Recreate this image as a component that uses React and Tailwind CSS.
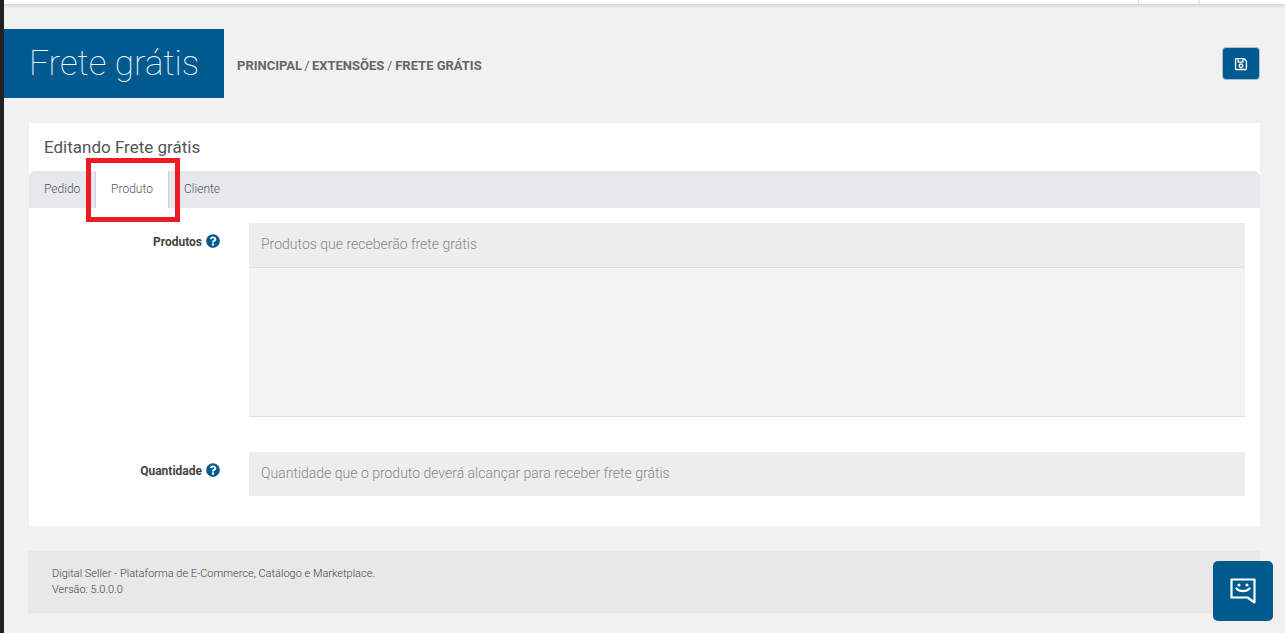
import React from "react";
import { FaQuestionCircle, FaRegSave } from "react-icons/fa";

function Help() {
  return <FaQuestionCircle className="text-[14px] text-[#005a8f] shrink-0" />;
}

function Field({ label, children, className = "" }) {
  return (
    <div className={`flex ${className}`}>
      <div className="w-[191px] pt-[11px] flex justify-end items-start gap-[4px] text-[12px] leading-[16px] font-bold text-[#444]">
        <span>{label}</span>
        <Help />
      </div>
      <div className="ml-[29px] w-[996px]">{children}</div>
    </div>
  );
}

export default function App() {
  return (
    <div className="relative h-[633px] w-[1285px] overflow-hidden bg-[#f1f1f1] font-['Roboto',sans-serif] text-[#555]">
      <div className="flex h-full">
        <div className="w-[4px] shrink-0 bg-[#222]" />
        <div className="flex-1 min-w-0">
          <div className="flex h-[4px] justify-end bg-white shadow-[0_1px_4px_rgba(0,0,0,0.2)]">
            <div className="w-[61px] border-l border-[#ddd]" />
            <div className="w-[86px] border-l border-[#ddd]" />
          </div>

          <div className="mt-[25px] flex h-[69px] items-center">
            <div className="flex h-full w-[220px] items-center bg-[#005a8f] pl-[25px] pt-[2px] text-[35px] font-thin text-white">
              Frete grátis
            </div>
            <div className="ml-[13px] pt-[4px] text-[13px] font-bold uppercase text-[#666]">
              Principal <span className="mx-[-1px] font-normal">/</span> Extensões <span className="mx-[-0.5px] font-normal">/</span> Frete grátis
            </div>
            <button className="ml-auto mr-[25px] flex h-[33px] w-[38px] items-center justify-center rounded-[4px] border border-[#a9bfcf] bg-[#005a8f] text-white">
              <FaRegSave className="text-[14px]" />
            </button>
          </div>

          <div className="ml-[25px] mt-[25px] h-[403px] w-[1231px] bg-white">
            <div className="flex h-[48px] items-center pl-[15px] pt-[1px] text-[17px] text-[#555]">Editando Frete grátis</div>
            <div className="flex h-[37px] rounded-t-[6px] bg-[#e6e8ed] pb-[2px] text-[12px] font-light">
              <div className="flex w-[66px] items-center pl-[15px]">Pedido</div>
              <div className="mb-[-2px] flex w-[74px] items-center justify-center border-x border-[#ccd0d8] bg-white pb-[2px]">Produto</div>
              <div className="flex items-center pl-[15px]">Cliente</div>
            </div>
            <Field label="Produtos" className="mt-[15px]">
              <div className="flex h-[45px] items-center border-b border-[#ddd] bg-[#ededed] pb-[2px] pl-[12px] text-[14px] font-light text-[#888]">
                Produtos que receberão frete grátis
              </div>
              <div className="h-[149px] border-b border-[#ddd] bg-[#f4f4f4]" />
            </Field>
            <Field label="Quantidade" className="mt-[35px]">
              <div className="flex h-[44px] items-center bg-[#ededed] pb-[2px] pl-[12px] text-[14px] font-light text-[#888]">
                Quantidade que o produto deverá alcançar para receber frete grátis
              </div>
            </Field>
          </div>

          <div className="ml-[24px] mt-[25px] h-[62px] w-[1232px] bg-[#e8e8e8] pl-[24px] pt-[15px] text-[11px] font-light leading-[16px] text-[#444]">
            <div>Digital Seller - Plataforma de E-Commerce, Catálogo e Marketplace.</div>
            <div>Versão: 5.0.0.0</div>
          </div>
        </div>
      </div>

      <div className="absolute left-[86px] top-[158px] h-[64px] w-[94px] border-[5px] border-[#ed1c24]" />

      <button className="absolute left-[1213px] top-[561px] flex h-[60px] w-[60px] items-center justify-center rounded-[5px] bg-[#005a8f]">
        <svg width="26" height="26" viewBox="0 0 26 26" fill="none" stroke="white" strokeWidth="2.2">
          <path d="M1.5 1.5h23v23l-7-5H1.5z" strokeLinejoin="round" />
          <path d="M6.5 10.5c3 3.4 10 3.4 13 0" strokeLinecap="round" />
          <circle cx="9" cy="7" r="1.6" fill="white" stroke="none" />
          <circle cx="17" cy="7" r="1.6" fill="white" stroke="none" />
        </svg>
      </button>
    </div>
  );
}
